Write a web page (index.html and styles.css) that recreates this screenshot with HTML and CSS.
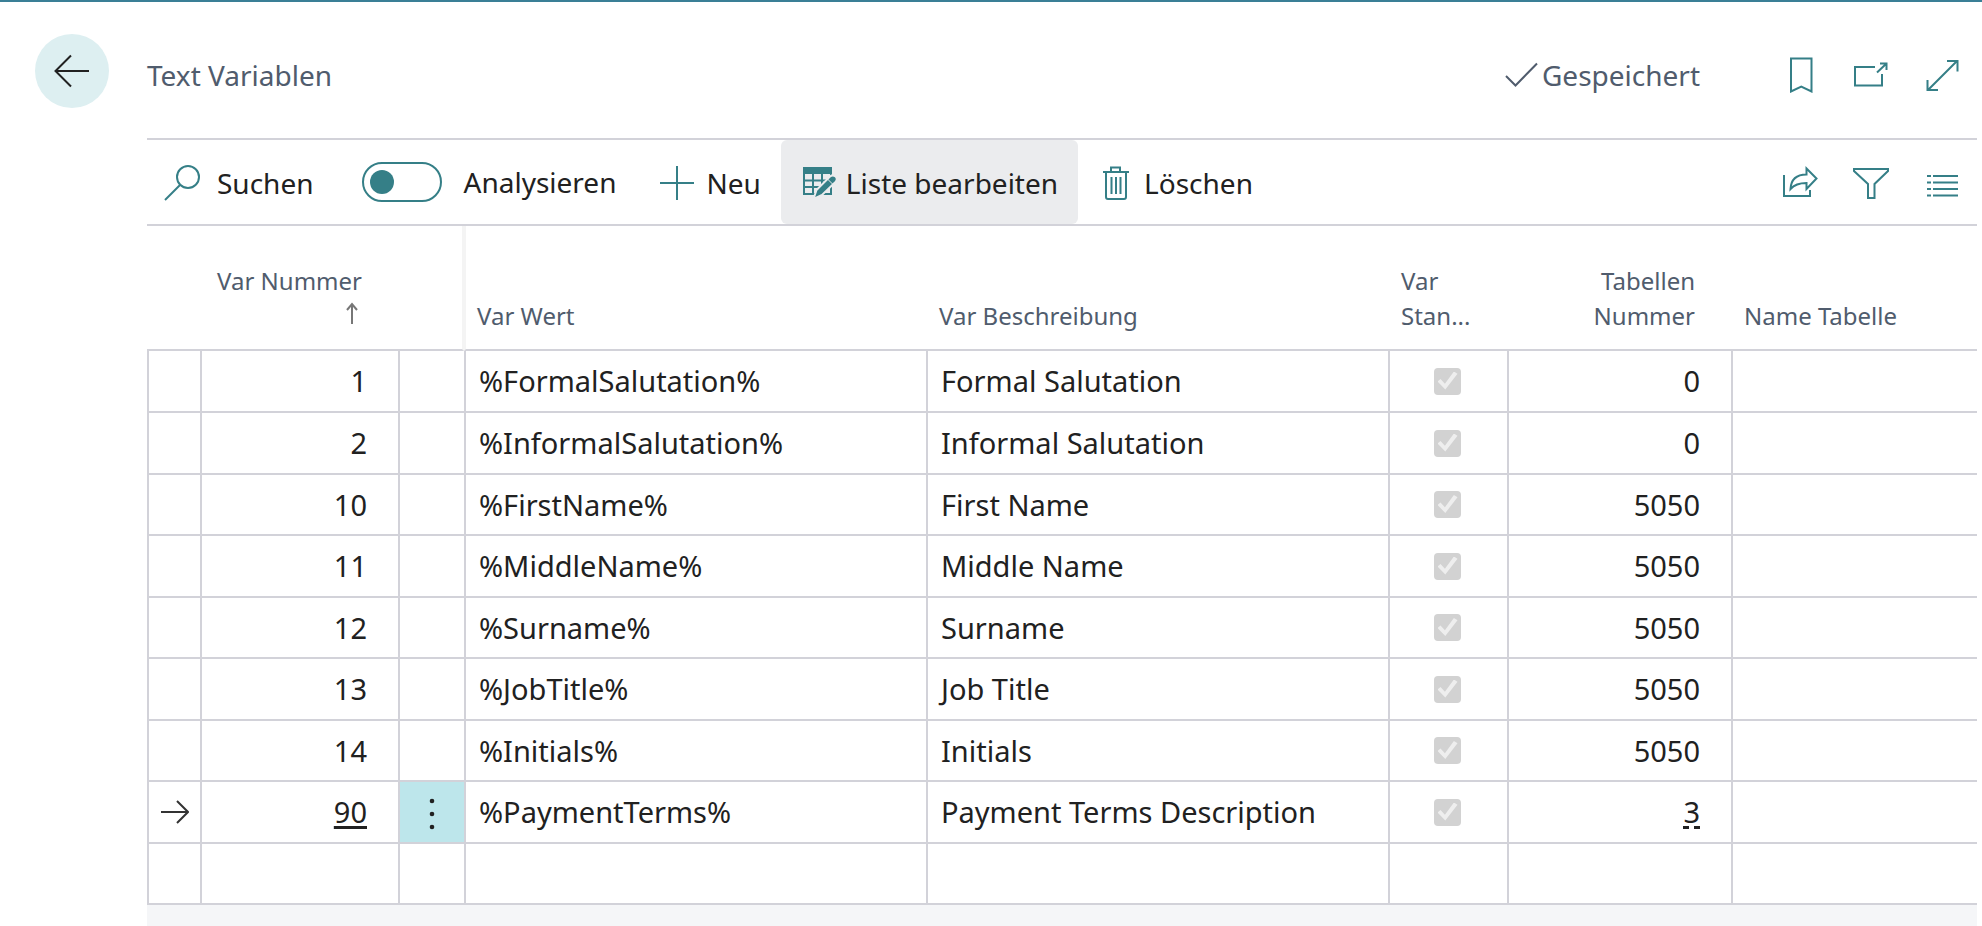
FILE: index.html
```html
<!DOCTYPE html>
<html lang="de">
<head>
<meta charset="utf-8">
<title>Text Variablen</title>
<link rel="stylesheet" href="styles.css">
</head>
<body>
<div class="page">
  <header class="header">
    <button class="back" type="button" aria-label="Zurück">
      <svg width="36" height="34" viewBox="0 0 36 34"><path d="M35 17H2M17 1.500L1.500 17L17 32.500"/></svg>
    </button>
    <h1 class="title">Text Variablen</h1>
    <span class="saved">
      <svg width="34" height="26" viewBox="0 0 34 26"><path d="M2 14L11.500 23.500L33 1.500"/></svg>
      Gespeichert
    </span>
    <div class="icons">
      <button type="button" class="icon" aria-label="Lesezeichen">
        <svg width="36" height="36" viewBox="0 0 36 36"><path d="M9 1.500H29.500V34.500L19.250 29.500L9 34.500Z"/></svg>
      </button>
      <button type="button" class="icon" aria-label="In neuem Fenster öffnen">
        <svg width="36" height="36" viewBox="0 0 36 36"><path d="M22 10H2V28.500H29V17M24 15.500L33.500 6.500M27 6.500H33.500V13"/></svg>
      </button>
      <button type="button" class="icon" aria-label="Vollbild">
        <svg width="36" height="36" viewBox="0 0 36 36"><path d="M4 33L33 4M23 4H33.500V14.500M3.500 23V33H14"/></svg>
      </button>
    </div>
  </header>

  <main class="content">
    <div class="toolbar" role="toolbar">
      <button type="button" class="action search">
        <svg width="38" height="38" viewBox="0 0 38 38"><circle cx="25" cy="13" r="11"/><path d="M17 21L2 36"/></svg>
        Suchen
      </button>
      <label class="analyse"><input type="checkbox" class="switch" role="switch">Analysieren</label>
      <button type="button" class="action">
        <svg width="34" height="34" viewBox="0 0 34 34"><path d="M17 0V34M0 17H34"/></svg>
        Neu
      </button>
      <button type="button" class="action active">
        <svg width="34" height="34" viewBox="0 0 34 34"><path d="M1 2H28V28H1ZM1 14.500H28M1 21H28M10 7V28M19 7V28"/><path class="solid" d="M0 1H29V8H0Z"/><path class="pencil" d="M10.500 33L13.500 24L27 10.500C31 7.500 36 12 32.500 16L19 29Z"/><path class="notch" d="M24.500 13L30 18.500"/></svg>
        Liste bearbeiten
      </button>
      <button type="button" class="action delete">
        <svg width="28" height="34" viewBox="0 0 28 34"><path d="M1 6H27M9 6V1.500H18V6M4 6V31Q4 33 6 33H22Q24 33 24 31V6M9.500 11V28M14 11V28M18.500 11V28"/></svg>
        Löschen
      </button>
      <div class="icons">
        <button type="button" class="icon" aria-label="Teilen">
          <svg width="36" height="36" viewBox="0 0 36 36"><path d="M2 11V32H28V26M8.500 25C9 16 14 10.500 24.500 10.500V4.500L34.500 14.500L24.500 25V19C17 19 12 21 8.500 25Z"/></svg>
        </button>
        <button type="button" class="icon" aria-label="Filter">
          <svg width="36" height="36" viewBox="0 0 36 36"><path d="M1 5H35V7L21.500 20V34H15V20L1 7Z"/></svg>
        </button>
        <button type="button" class="icon" aria-label="Liste">
          <svg width="36" height="36" viewBox="0 0 36 36"><path d="M3 12H7M9 12H34M3 18.500H7M9 18.500H34M3 25H7M9 25H34M3 31.500H7M9 31.500H34"/></svg>
        </button>
      </div>
    </div>

    <table class="grid">
      <colgroup><col class="c-mark"><col class="c-num"><col class="c-menu"><col class="c-text"><col class="c-text"><col class="c-std"><col class="c-tab"><col></colgroup>
      <thead>
        <tr>
          <th></th>
          <th class="num">Var Nummer<svg class="sort" width="12" height="23" viewBox="0 0 12 23"><path d="M6 22V3M1 8L6 2L11 8"/></svg></th>
          <th class="freeze-end"></th>
          <th class="freeze-start">Var Wert</th>
          <th>Var Beschreibung</th>
          <th>Var<br>Stan...</th>
          <th class="num">Tabellen<br>Nummer</th>
          <th>Name Tabelle</th>
        </tr>
      </thead>
      <tbody>
        <tr><td></td><td class="num">1</td><td></td><td>%FormalSalutation%</td><td>Formal Salutation</td><td class="check"><input type="checkbox" aria-label="Var Standard" checked disabled></td><td class="num">0</td><td></td></tr>
        <tr><td></td><td class="num">2</td><td></td><td>%InformalSalutation%</td><td>Informal Salutation</td><td class="check"><input type="checkbox" aria-label="Var Standard" checked disabled></td><td class="num">0</td><td></td></tr>
        <tr><td></td><td class="num">10</td><td></td><td>%FirstName%</td><td>First Name</td><td class="check"><input type="checkbox" aria-label="Var Standard" checked disabled></td><td class="num">5050</td><td></td></tr>
        <tr><td></td><td class="num">11</td><td></td><td>%MiddleName%</td><td>Middle Name</td><td class="check"><input type="checkbox" aria-label="Var Standard" checked disabled></td><td class="num">5050</td><td></td></tr>
        <tr><td></td><td class="num">12</td><td></td><td>%Surname%</td><td>Surname</td><td class="check"><input type="checkbox" aria-label="Var Standard" checked disabled></td><td class="num">5050</td><td></td></tr>
        <tr><td></td><td class="num">13</td><td></td><td>%JobTitle%</td><td>Job Title</td><td class="check"><input type="checkbox" aria-label="Var Standard" checked disabled></td><td class="num">5050</td><td></td></tr>
        <tr><td></td><td class="num">14</td><td></td><td>%Initials%</td><td>Initials</td><td class="check"><input type="checkbox" aria-label="Var Standard" checked disabled></td><td class="num">5050</td><td></td></tr>
        <tr>
          <td class="mark"><svg width="28" height="26" viewBox="0 0 28 26"><path d="M0 13H27M16 2L27 13L16 24"/></svg></td>
          <td class="num"><a class="link" href="#">90</a></td>
          <td class="menu"><button type="button" aria-label="Weitere Optionen"><svg width="6" height="32" viewBox="0 0 6 32"><circle cx="3" cy="3" r="2.300"/><circle cx="3" cy="16" r="2.300"/><circle cx="3" cy="29" r="2.300"/></svg></button></td>
          <td>%PaymentTerms%</td><td>Payment Terms Description</td><td class="check"><input type="checkbox" aria-label="Var Standard" checked disabled></td><td class="num"><a class="link dashed" href="#">3</a></td><td></td>
        </tr>
        <tr><td></td><td></td><td></td><td></td><td></td><td></td><td></td><td></td></tr>
      </tbody>
    </table>
    <div class="filler"></div>
  </main>
</div>
</body>
</html>
```
FILE: styles.css
```css
:root {
  --teal: #357f87;
  --line: #d2d2d9;
  --muted: #505c6d;
  --text: #212121;
}

* { box-sizing: border-box; }

body {
  margin: 0;
  background: #fff;
  color: var(--text);
  font: 28px/36px "Segoe UI", "Noto Sans", "Open Sans", sans-serif;
}

button {
  border: 0;
  padding: 0;
  background: none;
  color: inherit;
  font: inherit;
}

svg { display: block; flex: none; fill: none; stroke: var(--teal); stroke-width: 2; }

.page {
  display: flex;
  flex-direction: column;
  min-height: 100vh;
  border-top: 2px solid #3a7f96;
}

.header {
  display: flex;
  align-items: center;
  height: 136px;
  padding: 10px 22px 0 35px;
  color: var(--muted);
}

.back {
  display: grid;
  place-items: center;
  width: 74px;
  height: 74px;
  margin: 0 38px 8px 0;
  border-radius: 50%;
  background: #ddeff1;
}
.back svg { stroke: #212121; }

.title { flex: 1; margin: 0; font-size: 28px; font-weight: 400; }

.saved { display: flex; align-items: center; gap: 4px; margin-right: 82px; }
.saved svg { stroke: var(--muted); }

.icons { display: flex; gap: 35px; margin-left: auto; }
.header .icons { margin-left: 0; }

.content {
  display: flex;
  flex: 1;
  flex-direction: column;
  margin: 0 5px 0 147px;
}

.toolbar {
  display: flex;
  align-items: stretch;
  height: 88px;
  padding-right: 17px;
  border: solid var(--line);
  border-width: 2px 0;
}
.toolbar .icons { align-items: center; }

.action { display: flex; align-items: center; gap: 12px; padding: 2px 20px 0; }
.action.search { gap: 16px; padding: 2px 48px 0 16px; }
.action.active { gap: 9px; padding: 2px 20px 0 22px; border-radius: 6px; background: #ebecee; }
.action.delete { gap: 14px; padding-left: 24px; }

.solid { fill: var(--teal); stroke: none; }
.pencil { fill: var(--teal); stroke: #ebecee; }
.notch { stroke: #ebecee; stroke-width: 1; }

.analyse { display: flex; align-items: center; gap: 22px; padding-right: 24px; }

.switch {
  display: grid;
  align-items: center;
  appearance: none;
  width: 80px;
  height: 40px;
  margin: 0;
  padding-left: 6px;
  border: 2px solid var(--teal);
  border-radius: 20px;
}
.switch::before { content: ""; width: 24px; height: 24px; border-radius: 50%; background: var(--teal); }

.grid {
  width: 100%;
  border-collapse: separate;
  border-spacing: 0;
  table-layout: fixed;
}
.c-mark { width: 53px; }
.c-num { width: 198px; }
.c-menu { width: 66px; }
.c-text { width: 462px; }
.c-std { width: 119px; }
.c-tab { width: 224px; }

th {
  height: 125px;
  padding: 0 12px 16px 13px;
  border-bottom: 2px solid var(--line);
  color: var(--muted);
  font-size: 24px;
  font-weight: 400;
  line-height: 35px;
  text-align: left;
  vertical-align: bottom;
  white-space: nowrap;
}
th.num { padding-right: 36px; text-align: right; }
th.freeze-end { border-right: 2px solid #f4f4f4; }
th.freeze-start { padding-left: 11px; border-left: 2px solid #f4f4f4; }
.sort { margin: 4px 4px 8px auto; stroke: #777; }

td {
  height: 62px;
  padding: 0 13px;
  border: solid var(--line);
  border-width: 0 0 2px 2px;
  font-size: 29px;
  white-space: nowrap;
}
tr:nth-child(odd):not(:first-child) td { height: 61px; }
td.num { padding-right: 31px; text-align: right; }
td.check, td.mark, td.menu { padding: 0; text-align: center; }
td.check { padding-right: 2px; }
.mark svg { margin: 0 auto; stroke: #333; }
td.menu { padding-top: 4px; background: #bde6eb; }
.menu button { display: block; margin: 0 auto; }
.menu svg { fill: #212121; stroke: none; }

td.check input {
  display: block;
  appearance: none;
  width: 27px;
  height: 27px;
  margin: 0 auto;
  border-radius: 4px;
  background: #d2d2d2;
}
td.check input::before {
  content: "";
  display: block;
  width: 20px;
  height: 18px;
  margin: 0 auto;
  background: #eee;
  clip-path: polygon(0 55%, 15% 42%, 37% 68%, 82% 0, 100% 12%, 39% 100%);
  translate: 0 4px;
}

.link { color: inherit; text-decoration: underline 3px; text-underline-offset: 3px; text-decoration-skip-ink: none; }
.link.dashed { text-decoration-style: dashed; }

.filler { flex: 1; background: #f5f6f8; }
```
